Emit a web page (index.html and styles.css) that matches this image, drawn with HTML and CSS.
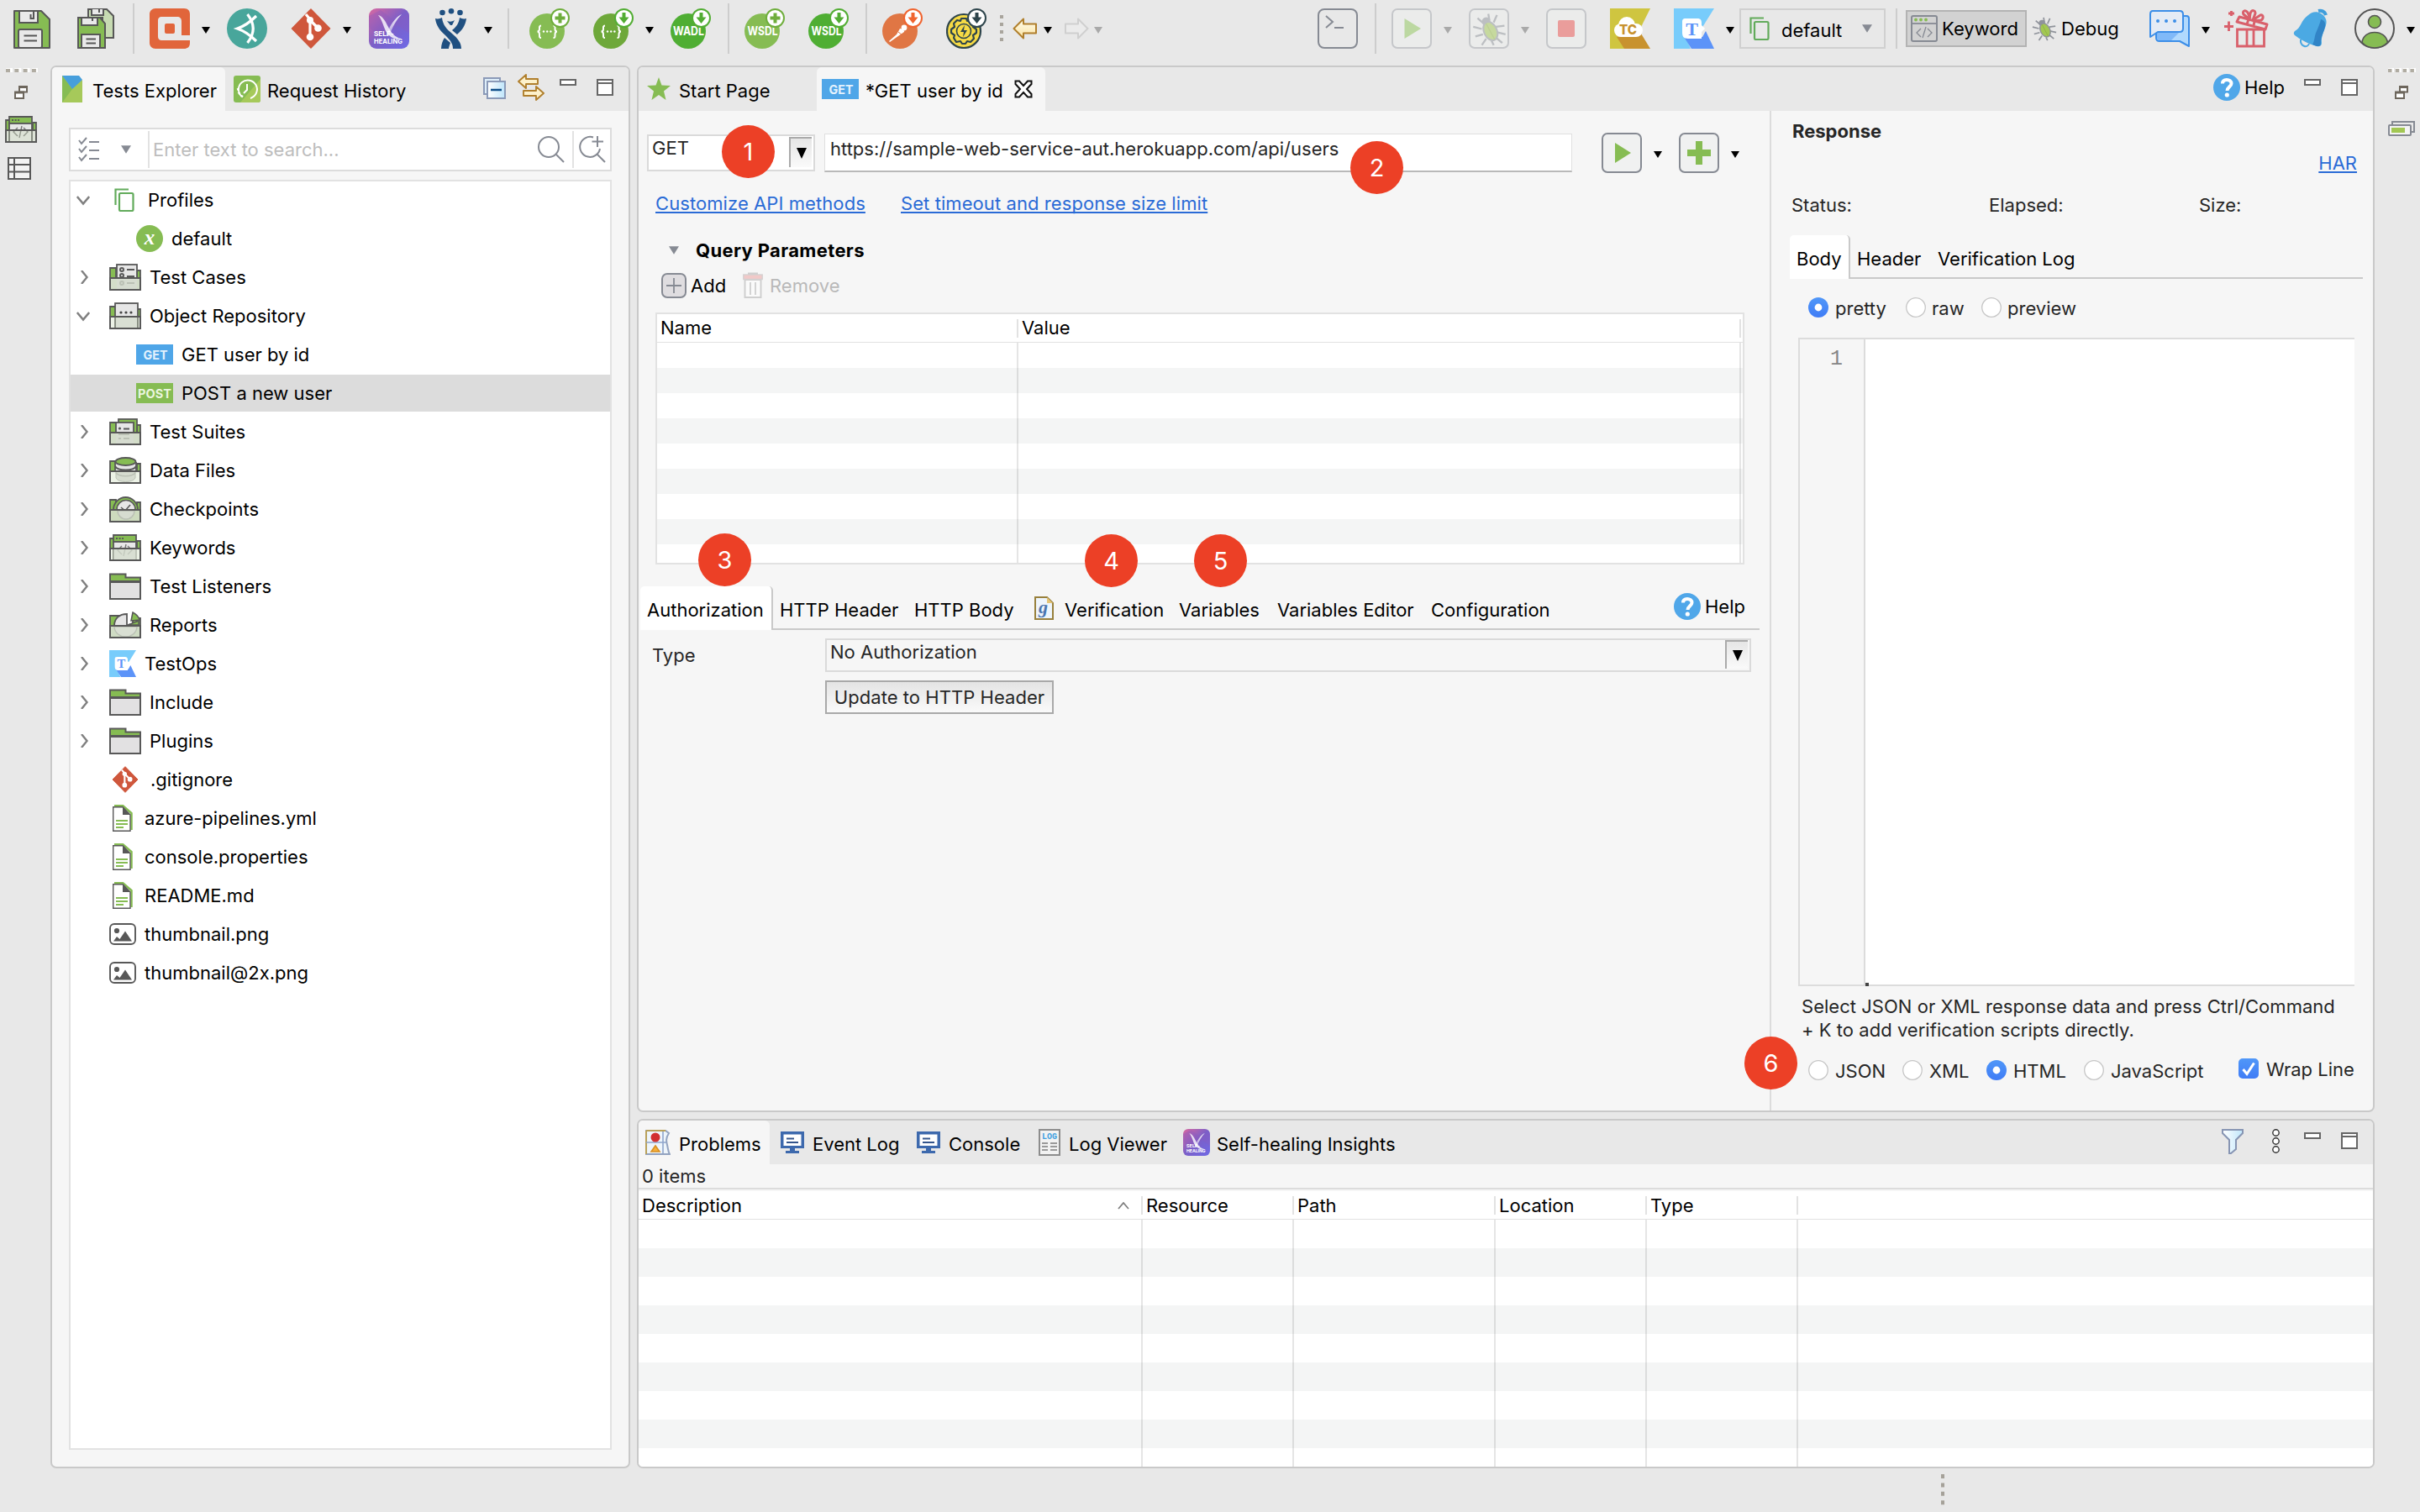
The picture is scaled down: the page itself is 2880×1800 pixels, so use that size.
FILE: index.html
```html
<!DOCTYPE html>
<html lang="en">
<head>
<meta charset="utf-8">
<title>Katalon Studio</title>
<link rel="stylesheet" href="styles.css">
</head>
<body>
<svg class="defs" width="0" height="0" aria-hidden="true">
  <defs>
    <linearGradient id="gHeal" x1="0" y1="0" x2="1" y2="1"><stop offset="0" stop-color="#d968a0"/><stop offset=".5" stop-color="#7b5fc8"/><stop offset="1" stop-color="#6e6ae6"/></linearGradient>
    <linearGradient id="gX" x1="0" y1="0" x2="0" y2="1"><stop offset="0" stop-color="#fff" stop-opacity=".95"/><stop offset="1" stop-color="#fff" stop-opacity=".35"/></linearGradient>
    <linearGradient id="gGold" x1="0" y1="0" x2="0" y2="1"><stop offset="0" stop-color="#fffdf0"/><stop offset="1" stop-color="#fbe3a0"/></linearGradient>
    <linearGradient id="gBlue" x1="0" y1="0" x2="1" y2="0"><stop offset="0" stop-color="#fff"/><stop offset="1" stop-color="#bfe6fb"/></linearGradient>
    <linearGradient id="gRadio" x1="0" y1="0" x2="0" y2="1"><stop offset="0" stop-color="#5097f8"/><stop offset="1" stop-color="#3f7cf6"/></linearGradient>
    <symbol id="down" viewBox="0 0 10 8"><path d="M0 0H10L5 8Z"/></symbol>
    <symbol id="copy" viewBox="0 0 24 28"><g fill="none" stroke="#62ab5b" stroke-width="2.2"><path d="M1.500 20V1.500H17"/><rect x="6" y="6" width="16.500" height="21" rx="1.500"/></g></symbol>
    <symbol id="bug" viewBox="0 0 32 32"><g fill="none" stroke="#8f939b" stroke-width="1.800"><path d="M12 12L5 6M9 16L1 14M10 21L3 23M13 25L9 31M16 8L15 2M20 10L23 3M22 14L30 13M23 19L31 21M22 24L28 29M18 27L20 31"/></g><circle cx="13" cy="9" r="4" fill="#8f939b"/><ellipse cx="17" cy="18" rx="6" ry="9" transform="rotate(-25 17 18)" fill="#a2c753" stroke="#8f939b" stroke-width="1.600"/><path d="M13 11L21 26" stroke="#8fb440" stroke-width="1"/></symbol>
    <symbol id="min" viewBox="0 0 20 32"><rect x="1" y="7" width="18" height="6" fill="#fff" stroke="#666" stroke-width="2"/></symbol>
    <symbol id="max" viewBox="0 0 20 32"><rect x="1" y="7" width="18" height="18" fill="#fff" stroke="#666" stroke-width="2"/><path d="M1 11H19" stroke="#666" stroke-width="2"/></symbol>
    <symbol id="help" viewBox="0 0 32 32"><circle cx="16" cy="16" r="16" fill="#50a7e9"/><path d="M11 11.500C11 8.500 13 7 16 7S21.500 8.700 21.500 11.500C21.500 15 16.500 15.500 16.500 20" fill="none" stroke="#fff" stroke-width="4"/><circle cx="16.300" cy="25" r="2.600" fill="#fff"/></symbol>
    <symbol id="restore" viewBox="0 0 16 16"><rect x="6" y="1.500" width="9" height="6" fill="#fff" stroke="#6d665c" stroke-width="2"/><path d="M5 1.500H16" stroke="#6d665c" stroke-width="3"/><rect x="1" y="8" width="10" height="7" fill="#fff" stroke="#6d665c" stroke-width="2"/><path d="M0 8H12" stroke="#6d665c" stroke-width="3"/></symbol>
    <symbol id="heal" viewBox="0 0 48 48"><rect width="48" height="48" rx="9" fill="url(#gHeal)"/><path d="M0 9L14 2L30 14L48 6V30L34 20L12 34L0 22Z" fill="#8a5cc0" opacity=".35"/><path d="M11 8C16 9 19 14 23 22C27 30 31 34 38 36C31 38 24 34 20 27C17 20 15 12 11 8Z" fill="#fff" opacity=".8"/><path d="M39 7C34 9 29 15 25 22L20 33H24C28 22 33 13 39 7Z" fill="url(#gX)"/><text x="6" y="33" font-size="8.200" font-weight="700" fill="#fff" font-family="Inter">SELF-</text><text x="6" y="41.500" font-size="8.200" font-weight="700" fill="#fff" font-family="Inter" textLength="34" lengthAdjust="spacingAndGlyphs">HEALING</text></symbol>
    <symbol id="git" viewBox="0 0 48 48"><path d="M24 1L46.500 24L24 47L1.500 24Z" fill="#cf573c" stroke="#cf573c" stroke-width="1.500" stroke-linejoin="round"/><g stroke="#fff" stroke-width="3.200" fill="none"><path d="M18 7L23 13V34M23 14L32 23"/></g><g fill="#fff"><circle cx="23" cy="14" r="4"/><circle cx="23" cy="34" r="4.300"/><circle cx="32.500" cy="23.500" r="4.300"/></g></symbol>
    <symbol id="testops" viewBox="0 0 48 48"><path d="M0 0H48L33 24L14 34L20 48H0Z" fill="#78ccfb"/><path d="M12 34H34L38 27L48 48H21Z" fill="#5c93f8"/><path d="M14 12H28C32 12 33 14 33 18V36H17C11 36 10 33 10 28V16C10 13 11 12 14 12Z" fill="#fff"/><path d="M33 20L37 24L33 28Z" fill="#fff"/><text x="21.500" y="32" font-size="22" font-weight="700" text-anchor="middle" fill="#5c93f8" font-family="Liberation Serif">T</text></symbol>
    <symbol id="folder" viewBox="0 0 38 32"><path d="M1 10V1.500H19.500V5.500H37V10Z" fill="#86bc53" stroke="#585858" stroke-width="2"/><rect x="1" y="11" width="36" height="20" fill="#e2e1e2" stroke="#585858" stroke-width="2"/></symbol>
    <symbol id="fback" viewBox="0 0 38 32"><path d="M1 17V5H8V17ZM33 17V8H37V17Z" fill="#86bc53" stroke="#585858" stroke-width="1.800"/></symbol>
    <symbol id="ffront" viewBox="0 0 38 32"><rect x="1" y="17" width="36" height="14" fill="#c9dab6" fill-opacity=".35" stroke="#585858" stroke-width="2"/></symbol>
    <symbol id="doc" viewBox="0 0 24 32"><path d="M2 1H12L22.500 10V30" fill="none" stroke="#86bc53" stroke-width="2.500"/><path d="M.7 2.700H12L21 12V31.300H.7Z" fill="#fff" stroke="#585858" stroke-width="1.400"/><path d="M12 2.500L21 12H12Z" fill="#585858"/><path d="M4 19H18M4 23H18M4 27H13" stroke="#86bc53" stroke-width="2"/></symbol>
    <symbol id="image" viewBox="0 0 32 26"><rect x="1" y="1" width="30" height="24" rx="5" fill="#fff" stroke="#585858" stroke-width="1.900"/><circle cx="9" cy="9" r="3.100" fill="#585858"/><path d="M5 21.500L9 16L12.500 19L19 9.500L27 21.500Z" fill="#585858"/></symbol>
    <symbol id="chr" viewBox="0 0 16 16"><path d="M6 0L12.500 8L6 16" fill="none" stroke="#808080" stroke-width="2.400"/></symbol>
    <symbol id="chd" viewBox="0 0 16 16"><path d="M.8 4L8 12.500L15.200 4" fill="none" stroke="#808080" stroke-width="2.600"/></symbol>
    <symbol id="get" viewBox="0 0 44 24"><rect width="44" height="24" fill="#4fa6e8"/><text x="23" y="17.500" font-size="15" font-weight="700" text-anchor="middle" fill="#e4f2fd" font-family="Inter" textLength="29" lengthAdjust="spacingAndGlyphs">GET</text></symbol>
    <symbol id="post" viewBox="0 0 44 24"><rect width="44" height="24" fill="#86bc53"/><text x="22" y="17.500" font-size="15" font-weight="700" text-anchor="middle" fill="#eaf5df" font-family="Inter" textLength="40" lengthAdjust="spacingAndGlyphs">POST</text></symbol>
    <symbol id="plusb" viewBox="0 0 48 48"><circle cx="36.500" cy="11.500" r="10.500" fill="#fff" stroke="currentColor" stroke-width="2"/><path d="M36.500 5.500V17.500M30.500 11.500H42.500" stroke="currentColor" stroke-width="4"/></symbol>
    <symbol id="downb" viewBox="0 0 48 48"><circle cx="36.500" cy="11.500" r="10.500" fill="#fff" stroke="currentColor" stroke-width="2"/><path d="M34.500 5H38.500V10.500H42.500L36.500 18L30.500 10.500H34.500Z" fill="currentColor"/></symbol>
    <symbol id="braces" viewBox="0 0 48 48"><g fill="none" stroke="#fff" stroke-width="2"><path d="M14 20.500C11.500 20.500 12 23 12 24.500S11.500 27.500 9.500 27.500C11.500 27.500 12 29 12 31S11.500 35 14 35M28.500 20.500C31 20.500 30.500 23 30.500 24.500S31 27.500 33 27.500C31 27.500 30.500 29 30.500 31S31 35 28.500 35"/></g><g fill="#fff"><circle cx="17" cy="27.500" r="1.200"/><circle cx="21.200" cy="27.500" r="1.200"/><circle cx="25.400" cy="27.500" r="1.200"/></g></symbol>
    <symbol id="monitor" viewBox="0 0 28 26"><path d="M0 0H28V20H0Z" fill="#3d69ad"/><path d="M3.500 3.500H24.500V17H3.500Z" fill="#fff"/><path d="M7 8.500H16M7 13H21" stroke="#34558c" stroke-width="2"/><path d="M11 20H17V23H22V26H6V23H11Z" fill="#3d69ad"/></symbol>
    <symbol id="radio" viewBox="0 0 24 24"><circle cx="12" cy="12" r="11.300" fill="#fff" stroke="#c6c6c6" stroke-width="1.300"/></symbol>
    <symbol id="radioOn" viewBox="0 0 24 24"><circle cx="12" cy="12" r="12" fill="url(#gRadio)"/><circle cx="12" cy="12" r="4.400" fill="#fff"/></symbol>
    <symbol id="code" viewBox="0 0 38 32"><path d="M5 9V1H32V9Z" fill="#86bc53" stroke="#585858" stroke-width="1.800"/><path d="M8 5H17" stroke="#585858" stroke-width="2" stroke-dasharray="2 1.600"/><rect x="5" y="9" width="27" height="22" fill="#e8e8e8" stroke="#585858" stroke-width="1.800"/><path d="M15 14L10 19L15 24M22 14L27 19L22 24M20 12L17 26" fill="none" stroke="#777" stroke-width="1.400"/></symbol>
  </defs>
</svg>

<header class="toolbar">
  <div class="tools tools-main">
    <svg class="i48" viewBox="0 0 48 48"><path d="M1 3H33L43 13V47H1Z" fill="#86bc53" stroke="#575757" stroke-width="2" stroke-linejoin="round"/><path d="M7 3H29V17H7Z" fill="#e9e9e9" stroke="#575757" stroke-width="2"/><path d="M20.500 7V12H24V3" fill="none" stroke="#575757" stroke-width="2"/><rect x="6" y="25" width="28" height="22" rx="2" fill="#e9e9e9" stroke="#575757" stroke-width="2"/><path d="M12.500 32.500H28M12.500 38.500H28" stroke="#575757" stroke-width="2"/></svg>
    <svg class="i48" viewBox="0 0 48 48"><path d="M13 1H35L43 9V35H30V11H13Z" fill="#c7dbb2" stroke="#575757" stroke-width="2"/><path d="M17 1V8H31V1M26 1V5" fill="#e9e9e9" stroke="#575757" stroke-width="2"/><path d="M1 11H27L33 18V47H1Z" fill="#86bc53" stroke="#575757" stroke-width="2"/><path d="M5 11H24V20H5ZM18 11V15" fill="#e9e9e9" stroke="#575757" stroke-width="2"/><rect x="5" y="31" width="22" height="16" fill="#e9e9e9" stroke="#575757" stroke-width="2"/><path d="M10.500 36.500H22M10.500 41.500H22" stroke="#575757" stroke-width="2"/></svg>
    <i class="sep tall"></i>
    <svg class="i48" viewBox="0 0 48 48"><path d="M7 0H41C46 0 48 3 48 7V32H38V15C38 12 36 10 33 10H15C11 10 10 12 10 15V33C10 37 12 38 15 38H48V41C48 46 45 48 41 48H7C3 48 0 45 0 41V7C0 3 3 0 7 0Z" fill="#e1653b"/><rect x="18" y="18" width="12" height="12" rx="2" fill="#e1653b"/></svg>
    <svg class="dn"><use href="#down"/></svg>
    <svg class="i48" viewBox="0 0 48 48"><circle cx="24" cy="24" r="24" fill="#48a69b"/><path d="M24.500 7Q38 24 24.500 41M35 9Q24 20 12.500 24Q24 28 35 39" fill="none" stroke="#fff" stroke-width="3.200"/></svg>
    <svg class="i48" viewBox="0 0 48 48"><use href="#git"/></svg>
    <svg class="dn"><use href="#down"/></svg>
    <svg class="i48"><use href="#heal"/></svg>
    <svg class="i48" viewBox="0 0 48 48"><g fill="#205081"><circle cx="8.500" cy="5" r="3.300"/><circle cx="19" cy="3.300" r="3.300"/><circle cx="29.500" cy="5" r="3.300"/><path d="M0 12C3 13 6 12 8 11C9 20 14 25 20 30C27 36 31 41 31 48H21C21 42 18 38 12 32C5 26 1 20 0 12ZM37 12C34 13 31 12 29 11C28 18 25 22 20 26L26 31C32 26 36 20 37 12ZM14 15C17 16 20 16 23 14L20 20H18ZM11 35L18 41C17 44 16 46 16 48H7C7 43 9 38 11 35Z"/></g></svg>
    <svg class="dn"><use href="#down"/></svg>
    <i class="sep"></i>
    <svg class="i48" viewBox="0 0 48 48" color="#6fae3c"><circle cx="21" cy="27" r="21" fill="#86bc53"/><use href="#braces"/><use href="#plusb"/></svg>
    <svg class="i48" viewBox="0 0 48 48" color="#52ad33"><circle cx="21" cy="27" r="21" fill="#6ea83a"/><use href="#braces"/><use href="#downb"/></svg>
    <svg class="dn"><use href="#down"/></svg>
    <svg class="i48" viewBox="0 0 48 48" color="#52ad33"><circle cx="21" cy="27" r="21" fill="#4fae33"/><text class="badge-text" x="21.500" y="32" textLength="37" lengthAdjust="spacingAndGlyphs">WADL</text><use href="#downb"/></svg>
    <i class="sep tall"></i>
    <svg class="i48" viewBox="0 0 48 48" color="#6fae3c"><circle cx="21" cy="27" r="21" fill="#86bc53"/><text class="badge-text" x="21.500" y="32" textLength="36" lengthAdjust="spacingAndGlyphs">WSDL</text><use href="#plusb"/></svg>
    <svg class="i48" viewBox="0 0 48 48" color="#52ad33"><circle cx="21" cy="27" r="21" fill="#4fae33"/><text class="badge-text" x="21.500" y="32" textLength="36" lengthAdjust="spacingAndGlyphs">WSDL</text><use href="#downb"/></svg>
    <i class="sep tall"></i>
    <svg class="i48" viewBox="0 0 48 48" color="#f0642f"><circle cx="21" cy="27" r="21" fill="#e07644"/><circle cx="26" cy="23" r="3.400" fill="#fff"/><path d="M21 24C24 24 27 27 26 28L9 40L8 39L17 31Z" fill="#fff"/><path d="M19 28L24 32" stroke="#e07644"/><use href="#downb"/></svg>
    <svg class="i48" viewBox="0 0 48 48" color="#2e454c"><circle cx="21" cy="27" r="20" fill="#f6da45" stroke="#2e454c" stroke-width="2.200"/><path d="M18 12H24L25 15L30 14L33 19L32 22L36 25V29L32 32L33 36L29 40L25 39L23 42H19L17 39L12 40L9 35L10 32L6 29V25L10 22L9 18L13 14L17 15Z" fill="none" stroke="#2e454c" stroke-width="2.200" stroke-linejoin="round"/><circle cx="21" cy="27" r="8.500" fill="none" stroke="#2e454c" stroke-width="1.600"/><path d="M22 20L17 28H21L20 34L25 26H21Z" fill="#2e454c"/><use href="#downb"/></svg>
    <svg width="4" height="34" viewBox="0 0 4 34"><path d="M2 1V34" stroke="#a9a59d" stroke-width="4" stroke-dasharray="4 5"/></svg>
    <svg width="30" height="26" viewBox="0 0 30 26"><path d="M1.500 13L13 1.500V7.500H28V18.500H13V24.500Z" fill="url(#gGold)" stroke="#b07f2c" stroke-width="2" stroke-linejoin="round"/></svg>
    <svg class="dn"><use href="#down"/></svg>
    <svg width="30" height="26" viewBox="0 0 30 26"><path d="M28.500 13L17 1.500V7.500H2V18.500H17V24.500Z" fill="#ebebeb" stroke="#cfcfcf" stroke-width="2" stroke-linejoin="round"/></svg>
    <svg class="dn off"><use href="#down"/></svg>
  </div>
  <div class="tools tools-side">
    <svg class="i48" viewBox="0 0 48 48"><rect x="1" y="1" width="46" height="46" rx="7" fill="none" stroke="#868a93" stroke-width="2"/><path d="M10 9L18 16L10 23M20 23H31" fill="none" stroke="#868a93" stroke-width="2"/></svg>
    <i class="sep tall"></i>
    <svg class="i48" viewBox="0 0 48 48"><rect x="1" y="1" width="46" height="46" rx="6" fill="#ebeceb" stroke="#c5c7ca" stroke-width="2"/><path d="M15.500 12L35 24L15.500 36Z" fill="#bcd8a1"/></svg>
    <svg class="dn off"><use href="#down"/></svg>
    <svg class="i48" viewBox="0 0 48 48"><rect x="1" y="1" width="46" height="46" rx="6" fill="#ebeceb" stroke="#c5c7ca" stroke-width="2"/><svg x="4" y="4" width="41" height="41" opacity=".5"><use href="#bug"/></svg></svg>
    <svg class="dn off"><use href="#down"/></svg>
    <svg class="i48" viewBox="0 0 48 48"><rect x="1" y="1" width="46" height="46" rx="6" fill="#ebeceb" stroke="#c5c7ca" stroke-width="2"/><rect x="14" y="14" width="20" height="20" rx="2" fill="#ea9d9b"/></svg>
    <svg class="i48" viewBox="0 0 48 48"><path d="M0 0H48L39 18L33 32H10L18 48H0Z" fill="#cfc540"/><path d="M8 34L37 30L48 48H17Z" fill="#c8922f"/><circle cx="20" cy="20" r="10" fill="#fff"/><rect x="5" y="18" width="34" height="16" rx="8" fill="#fff"/><text x="21.500" y="31" font-size="16" font-weight="800" text-anchor="middle" fill="#c8922f" font-family="Inter" textLength="21" lengthAdjust="spacingAndGlyphs">TC</text></svg>
    <svg class="i48"><use href="#testops"/></svg>
    <svg class="dn"><use href="#down"/></svg>
    <div class="profile-combo"><svg width="24" height="28"><use href="#copy"/></svg><span>default</span><svg class="dn big"><use href="#down"/></svg></div>
    <i class="sep"></i>
    <div class="perspective on"><svg width="32" height="32" viewBox="0 0 32 32"><rect x="1" y="1" width="30" height="30" rx="2" fill="none" stroke="#868a93" stroke-width="2"/><path d="M1 10H31" stroke="#868a93" stroke-width="1.800"/><circle cx="6" cy="5.500" r="1.900" fill="#86bc53"/><circle cx="12" cy="5.500" r="1.900" fill="#86bc53"/><circle cx="18" cy="5.500" r="1.900" fill="#86bc53"/><path d="M12 16L7 21L12 26M20 16L25 21L20 26M18 14L14 27" fill="none" stroke="#868a93" stroke-width="1.300"/></svg><span>Keyword</span></div>
    <div class="perspective"><svg width="30" height="30"><use href="#bug"/></svg><span>Debug</span></div>
    <svg class="i48" viewBox="0 0 48 48"><path d="M39 9H44C46 9 47 10 47 12V45L36 39H12C9 39 8 38 8 35V28" fill="#b1d9fd" stroke="#3c8ee8" stroke-width="2" stroke-linejoin="round"/><path d="M9 28H36L26 38H12C9 38 9 36 9 33Z" fill="#80b9f8"/><path d="M4 3H36C39 3 40 4 40 7V24C40 27 39 28 36 28H10L1 34V7C1 4 2 3 4 3Z" fill="#e4ebf5" stroke="#3c8ee8" stroke-width="2" stroke-linejoin="round"/><g fill="#3c8ee8"><circle cx="10" cy="15" r="2"/><circle cx="20" cy="15" r="2"/><circle cx="30" cy="15" r="2"/></g></svg>
    <svg class="dn"><use href="#down"/></svg>
    <svg width="54" height="48" viewBox="0 0 54 48"><g fill="none" stroke="#d9606b" stroke-width="3"><path d="M16.500 25H48.500V45H16.500ZM28 25V45M36 25V45M6.500 15.500V27M1 21.500H12M9.500 3V9M6 6H13" stroke-width="2.800"/><path d="M19 10L52 19L50 25L16 16ZM31 13L32 6C34 1 38 2 38 6L35 14L44 8C48 7 48 12 45 14L36 15M31 13L24 7C22 3 26 1 29 5L32 12M30 13L28 19M37 15L36 21" stroke-linejoin="round"/></g></svg>
    <svg width="42" height="48" viewBox="0 0 42 48"><path d="M30 3C34 2 38 4 39 8" fill="none" stroke="#3f9edc" stroke-width="4"/><path d="M9 37C8 45 17 48 19 42" fill="none" stroke="#4ba9e3" stroke-width="2"/><path d="M18 8C22 4 28 3 33 6C38 9 41 14 39 20C37 28 33 33 34 41C34 45 31 46 28 45C18 42 8 37 2 32C0 30 1 28 2 27C10 23 9 14 18 8Z" fill="#4ba9e3"/><path d="M33 13C37 14 39 17 38 22C36 29 33 34 33 41C33 45 31 45 28 45L23 43C26 38 25 33 28 27C30 22 32 18 33 13Z" fill="#3184c6"/></svg>
    <svg class="i48" viewBox="0 0 48 48"><circle cx="24" cy="24" r="23" fill="none" stroke="#555" stroke-width="2"/><circle cx="24" cy="16" r="7.500" fill="#86bc53" stroke="#555" stroke-width="1.600"/><path d="M9 40.500C10 33 16 28.500 24 28.500S38 33 39.500 40.500C35 45 30 47 24 47S13 45 9 40.500Z" fill="#86bc53" stroke="#555" stroke-width="1.600"/></svg>
    <svg class="dn"><use href="#down"/></svg>
  </div>
</header>

<main class="workbench">
  <aside class="dock">
    <svg width="38" height="6"><path d="M0 3.500H38" stroke="#fff" stroke-width="5" stroke-dasharray="8 2.300"/><path d="M0 4H38" stroke="#b0aca2" stroke-width="4" stroke-dasharray="5 5.300"/></svg>
    <svg class="d-restore" width="16" height="16"><use href="#restore"/></svg>
    <svg class="d-code" width="38" height="32"><use href="#fback"/><use href="#code"/><use href="#ffront"/></svg>
    <svg class="d-table" width="28" height="27" viewBox="0 0 28 27"><path d="M1 1H27V26H1ZM1 9H27M1 17.500H27M8 1V26" fill="#f3f3f3" stroke="#585858" stroke-width="2"/></svg>
  </aside>

  <section class="panel explorer">
    <div class="strip">
      <div class="tab active t-explorer"><svg width="24" height="32" viewBox="0 0 24 32"><path d="M0 0H19L24 6V32H0Z" fill="#a6c95a"/><path d="M0 0V32L12 16Z" fill="#86bc53"/><path d="M0 0H20L24 5L12 16Z" fill="#479fdc"/></svg><span>Tests Explorer</span></div>
      <div class="tab t-history"><svg width="32" height="32" viewBox="0 0 32 32"><rect width="32" height="32" rx="3" fill="#86bc53"/><path d="M8 32L32 4V29C32 31 31 32 29 32Z" fill="#a6c95a"/><path d="M10 25A11 11 0 1 1 20 27" fill="none" stroke="#fff" stroke-width="2"/><path d="M16 10V17L12 21" fill="none" stroke="#fff" stroke-width="2"/><path d="M5 15L6 20L9 24L13 26" stroke="#fff" stroke-width="2.500" stroke-dasharray="2.500 2.500" fill="none"/></svg><span>Request History</span></div>
      <div class="strip-tools">
        <svg width="27" height="32" viewBox="0 0 27 32"><rect x="1" y="5" width="19" height="19" fill="#dfeffa" stroke="#8b9ab8" stroke-width="2"/><rect x="5" y="9" width="21" height="20" fill="url(#gBlue)" stroke="#8b9ab8" stroke-width="2"/><path d="M9 19H22" stroke="#0f4f8a" stroke-width="2.400"/></svg>
        <svg class="m14" width="32" height="32" viewBox="0 0 32 32"><g fill="#fdf1cb" stroke="#b07f2c" stroke-width="1.900" stroke-linejoin="round"><path d="M1 9L10 1V6H24V12H10V17Z"/><path d="M31 23L22 15V20H7V26H22V31Z"/></g></svg>
        <svg class="m18" width="20" height="32"><use href="#min"/></svg>
        <svg class="m24" width="20" height="32"><use href="#max"/></svg>
      </div>
    </div>
    <div class="search">
      <div class="search-filter"><svg width="26" height="30" viewBox="0 0 26 30"><path d="M1 4L4 8L10 1M1 14L4 18L10 11M1 24L4 28L10 21M13 6H25M13 16H25M13 26H25" fill="none" stroke="#868a93" stroke-width="2"/></svg><svg class="dn big"><use href="#down"/></svg></div>
      <div class="search-text">Enter text to search...</div>
      <svg width="34" height="34" viewBox="0 0 34 34"><circle cx="14" cy="14" r="12" fill="none" stroke="#868a93" stroke-width="2"/><path d="M23 23L32 32" stroke="#868a93" stroke-width="2"/></svg>
      <div class="search-add"><svg width="34" height="34" viewBox="0 0 34 34"><path d="M18 2.500A12 12 0 1 0 26 16M23 23L32 32M23 1V14M16.500 7.500H30" fill="none" stroke="#868a93" stroke-width="2"/></svg></div>
    </div>
    <div class="tree">
      <div class="node"><svg class="ch"><use href="#chd"/></svg><svg class="n-copy" width="24" height="28"><use href="#copy"/></svg><span class="g17">Profiles</span></div>
      <div class="node child"><svg width="32" height="32" viewBox="0 0 32 32"><circle cx="16" cy="16" r="16" fill="#86bc53"/><text x="16" y="22.500" font-size="25" font-style="italic" font-weight="700" text-anchor="middle" fill="#fff" font-family="Liberation Serif">x</text></svg><span class="g10">default</span></div>
      <div class="node"><svg class="ch"><use href="#chr"/></svg><svg class="fi" viewBox="0 0 38 32"><use href="#fback"/><rect x="9" y="1" width="24" height="30" fill="#e6e6e6" stroke="#585858" stroke-width="1.800"/><circle cx="15" cy="7" r="2" fill="none" stroke="#585858" stroke-width="2"/><circle cx="15" cy="14" r="2" fill="none" stroke="#585858" stroke-width="2"/><path d="M21 7H30M21 15H30" stroke="#585858" stroke-width="2"/><path d="M1 17H37V31H1Z" fill="#d9dfd3"/><path d="M9 17H33V31H9Z" fill="#dddddd"/><circle cx="15" cy="23" r="2" fill="none" stroke="#b4b4b4" stroke-width="2"/><path d="M21 23H30" stroke="#b4b4b4" stroke-width="2"/><use href="#ffront"/></svg><span class="g10">Test Cases</span></div>
      <div class="node"><svg class="ch"><use href="#chd"/></svg><svg class="fi" viewBox="0 0 38 32"><use href="#fback"/><rect x="7" y="1" width="27" height="30" fill="#e6e6e6" stroke="#585858" stroke-width="1.800"/><circle cx="14" cy="12" r="1.600" fill="#444"/><circle cx="20" cy="12" r="1.600" fill="#444"/><circle cx="26" cy="12" r="1.600" fill="#444"/><path d="M8 17H33V31H8Z" fill="#e2e2e2"/><use href="#ffront"/></svg><span class="g10">Object Repository</span></div>
      <div class="node child"><svg width="44" height="24"><use href="#get"/></svg><span class="g10">GET user by id</span></div>
      <div class="node child selected"><svg width="44" height="24"><use href="#post"/></svg><span class="g10">POST a new user</span></div>
      <div class="node"><svg class="ch"><use href="#chr"/></svg><svg class="fi" viewBox="0 0 38 32"><use href="#fback"/><rect x="11" y="1" width="22" height="28" fill="#86bc53" stroke="#585858" stroke-width="1.800"/><rect x="8" y="5" width="21" height="26" fill="#e6e6e6" stroke="#585858" stroke-width="1.800"/><circle cx="12.500" cy="12" r="1.600" fill="#585858"/><path d="M17 12.500H24" stroke="#585858" stroke-width="2"/><path d="M1 17H37V31H1Z" fill="#d9dfd3"/><path d="M8 17H29V31H8Z" fill="#dddddd"/><path d="M11 24H14M17 24H24M11 19H24" stroke="#b4b4b4" stroke-width="2"/><use href="#ffront"/></svg><span class="g10">Test Suites</span></div>
      <div class="node"><svg class="ch"><use href="#chr"/></svg><svg class="fi" viewBox="0 0 38 32"><use href="#fback"/><path d="M7 6V17H32V6" fill="#e6e6e6" stroke="#585858" stroke-width="1.800"/><ellipse cx="19.500" cy="5.500" rx="12" ry="4.500" fill="#86bc53" stroke="#585858" stroke-width="1.800"/><path d="M7 11C10 17 29 17 32 11" fill="none" stroke="#585858" stroke-width="1.800"/><path d="M8 17H31V25C28 31 11 31 8 25Z" fill="#dedede" stroke="#b4b4b4"/><path d="M8 19C12 24 27 24 31 19" fill="none" stroke="#b4b4b4" stroke-width="1.500"/><use href="#ffront"/></svg><span class="g10">Data Files</span></div>
      <div class="node"><svg class="ch"><use href="#chr"/></svg><svg class="fi" viewBox="0 0 38 32"><use href="#fback"/><path d="M5 17A14.500 15 0 0 1 34 17Z" fill="#86bc53" stroke="#585858" stroke-width="1.800"/><circle cx="20" cy="16.500" r="11" fill="#e6e6e6" stroke="#585858" stroke-width="1.600"/><path d="M14 14L19 18L25 11" fill="none" stroke="#585858" stroke-width="1.600"/><path d="M1 17H37V31H1Z" fill="#cfdcc2"/><path d="M10 18A10 10 0 0 0 30 18Z" fill="#dedede" stroke="#b4b4b4" stroke-width="1.600"/><use href="#ffront"/></svg><span class="g10">Checkpoints</span></div>
      <div class="node"><svg class="ch"><use href="#chr"/></svg><svg class="fi" viewBox="0 0 38 32"><use href="#fback"/><use href="#code"/><path d="M5 17H33V31H5Z" fill="#e0e0e0" opacity=".7"/><use href="#ffront"/></svg><span class="g10">Keywords</span></div>
      <div class="node"><svg class="ch"><use href="#chr"/></svg><svg class="fi"><use href="#folder"/></svg><span class="g10">Test Listeners</span></div>
      <div class="node"><svg class="ch"><use href="#chr"/></svg><svg class="fi" viewBox="0 0 38 32"><path d="M1 17V5H14V17ZM28 17V8H37V17Z" fill="#86bc53" stroke="#585858" stroke-width="1.800"/><path d="M6 17C6 8 12 3 21 3V17Z" fill="#e6e6e6" stroke="#585858" stroke-width="1.800"/><path d="M26 11L28 1C32 3 35 6 36 10ZM22 16L35 11V16Z" fill="#86bc53" stroke="#585858" stroke-width="1.500"/><path d="M1 17H37V31H1Z" fill="#d3decb"/><path d="M6 18C7 34 32 34 33 18Z" fill="#e2e2e2" stroke="#b4b4b4" stroke-width="1.500"/><use href="#ffront"/></svg><span class="g10">Reports</span></div>
      <div class="node"><svg class="ch"><use href="#chr"/></svg><svg class="n-ops" width="32" height="32"><use href="#testops"/></svg><span class="g10">TestOps</span></div>
      <div class="node"><svg class="ch"><use href="#chr"/></svg><svg class="fi"><use href="#folder"/></svg><span class="g10">Include</span></div>
      <div class="node"><svg class="ch"><use href="#chr"/></svg><svg class="fi"><use href="#folder"/></svg><span class="g10">Plugins</span></div>
      <div class="node leaf"><svg class="n-git" width="32" height="32"><use href="#git"/></svg><span>.gitignore</span></div>
      <div class="node leaf"><svg class="n-doc" width="24" height="32"><use href="#doc"/></svg><span>azure-pipelines.yml</span></div>
      <div class="node leaf"><svg class="n-doc" width="24" height="32"><use href="#doc"/></svg><span>console.properties</span></div>
      <div class="node leaf"><svg class="n-doc" width="24" height="32"><use href="#doc"/></svg><span>README.md</span></div>
      <div class="node leaf"><svg class="n-img" width="32" height="26"><use href="#image"/></svg><span>thumbnail.png</span></div>
      <div class="node leaf"><svg class="n-img" width="32" height="26"><use href="#image"/></svg><span>thumbnail@2x.png</span></div>
    </div>
  </section>

  <div class="center">
    <section class="panel editor">
      <div class="strip">
        <div class="tab t-start"><svg width="28" height="28" viewBox="0 0 28 28"><path d="M14 0L17.500 9.500L28 10L20 16.500L22.500 27L14 21L5.500 27L8 16.500L0 10L10.500 9.500Z" fill="#86bc53"/></svg><span>Start Page</span></div>
        <div class="tab active t-get"><svg width="44" height="24"><use href="#get"/></svg><span>*GET user by id</span><svg class="close" width="22" height="22" viewBox="0 0 22 22"><path d="M1.500 1.500H6L11 7L16 1.500H20.500V5L15 11L20.500 17V20.500H16L11 15L6 20.500H1.500V17L7 11L1.500 5Z" fill="#fff" stroke="#111" stroke-width="2"/></svg></div>
        <div class="strip-tools"><div class="help"><svg width="32" height="32"><use href="#help"/></svg><span>Help</span></div><svg width="20" height="32"><use href="#min"/></svg><svg class="m24" width="20" height="32"><use href="#max"/></svg></div>
      </div>
      <div class="editor-body">
        <div class="request">
          <div class="request-line">
            <div class="combo method"><span>GET</span><i class="combo-btn"><svg width="12" height="13" viewBox="0 0 12 13"><path d="M0 0H12L6 13Z"/></svg></i></div>
            <div class="url">https://sample-web-service-aut.herokuapp.com/api/users</div>
            <svg class="i48" viewBox="0 0 48 48"><rect x="1" y="1" width="46" height="46" rx="6" fill="#f0f1f1" stroke="#868a93" stroke-width="2"/><path d="M16 12L35 24L16 36Z" fill="#86bc53"/></svg>
            <svg class="dn"><use href="#down"/></svg>
            <svg class="i48" viewBox="0 0 48 48"><rect x="1" y="1" width="46" height="46" rx="6" fill="#f0f1f1" stroke="#868a93" stroke-width="2"/><path d="M24 10V38M10 24H38" stroke="#86bc53" stroke-width="8"/></svg>
            <svg class="dn"><use href="#down"/></svg>
          </div>
          <div class="request-links"><a>Customize API methods</a><a>Set timeout and response size limit</a></div>
          <div class="section-head"><svg class="dn big"><use href="#down"/></svg><b>Query Parameters</b></div>
          <div class="param-tools">
            <svg width="30" height="30" viewBox="0 0 30 30"><rect x="1" y="1" width="28" height="28" rx="6" fill="#dfdde0" stroke="#868a93" stroke-width="2"/><path d="M15 6V24M6 15H24" stroke="#868a93" stroke-width="1.800"/></svg><span>Add</span>
            <svg width="24" height="32" viewBox="0 0 24 32"><path d="M2.500 9H21.500V30H2.500Z" fill="#fafafa" stroke="#cfcfcf" stroke-width="2"/><path d="M6 0.500H18V3H6Z" fill="#cfcfcf"/><rect x=".8" y="3" width="22.400" height="5.500" fill="#f1c9c8" stroke="#d4d0d0" stroke-width="1.400"/><path d="M9 12V27M15 12V27" stroke="#cfcfcf" stroke-width="1.800"/></svg><span class="disabled">Remove</span>
          </div>
          <div class="params">
            <div class="params-head"><span>Name</span><span>Value</span><span></span></div>
            <div class="params-rows"><i></i><i></i><i></i></div>
          </div>
          <div class="subtabs auth-tabs">
            <div class="subtab active">Authorization</div><div class="subtab">HTTP Header</div><div class="subtab">HTTP Body</div>
            <div class="subtab verif"><svg width="23" height="28" viewBox="0 0 23 28"><path d="M1 1H15L22 8V27H1Z" fill="#eef5fc" stroke="#98803c" stroke-width="2"/><path d="M15 1V8H22Z" fill="#e3c478"/><text x="10.500" y="20" font-size="22" font-style="italic" font-weight="700" text-anchor="middle" fill="#4a76b0" font-family="Liberation Serif">g</text></svg>Verification</div>
            <div class="subtab">Variables</div><div class="subtab">Variables Editor</div><div class="subtab">Configuration</div>
            <div class="help"><svg width="32" height="32"><use href="#help"/></svg><span>Help</span></div>
          </div>
          <div class="auth-form">
            <label>Type</label>
            <div class="combo auth-type"><span>No Authorization</span><i class="combo-btn"><svg width="12" height="13" viewBox="0 0 12 13"><path d="M0 0H12L6 13Z"/></svg></i></div>
            <button>Update to HTTP Header</button>
          </div>
        </div>
        <div class="response">
          <b>Response</b>
          <a class="har">HAR</a>
          <div class="stats"><span>Status:</span><span>Elapsed:</span><span>Size:</span></div>
          <div class="subtabs resp-tabs"><div class="subtab active">Body</div><div class="subtab">Header</div><div class="subtab">Verification Log</div></div>
          <div class="options view-options">
            <svg class="rd"><use href="#radioOn"/></svg><span>pretty</span><svg class="rd"><use href="#radio"/></svg><span>raw</span><svg class="rd"><use href="#radio"/></svg><span>preview</span>
          </div>
          <div class="code"><div class="gutter">1</div><div class="code-area"><i></i></div></div>
          <p>Select JSON or XML response data and press Ctrl/Command<br>+ K to add verification scripts directly.</p>
          <div class="options format-options">
            <svg class="rd"><use href="#radio"/></svg><span>JSON</span><svg class="rd"><use href="#radio"/></svg><span>XML</span><svg class="rd"><use href="#radioOn"/></svg><span>HTML</span><svg class="rd"><use href="#radio"/></svg><span>JavaScript</span>
            <svg class="rd cb" viewBox="0 0 24 24"><rect width="24" height="24" rx="5" fill="url(#gRadio)"/><path d="M5.500 13L10 18.500L18.500 5.500" fill="none" stroke="#fff" stroke-width="3"/></svg><span class="cb">Wrap Line</span>
          </div>
        </div>
      </div>
    </section>

    <section class="panel problems">
      <div class="strip">
        <div class="tab active t-problems"><svg width="30" height="30" viewBox="0 0 30 30"><path d="M1 1H24L28 4C24 10 25 14 26 18S27 26 29 29H1Z" fill="#eef5fb" stroke="#93a3c0" stroke-width="2"/><path d="M1 1H24M1 1V29" stroke="#b9a15a" stroke-width="2"/><path d="M1 15H25M21 2V28" stroke="#8fa5cc" stroke-width="1.600"/><circle cx="12" cy="9" r="5.500" fill="#d22f2f"/><path d="M12 19L17 26H7Z" fill="#f5b13d" stroke="#d98f20" stroke-width="1.600"/></svg><span>Problems</span></div>
        <div class="tab"><svg width="28" height="26"><use href="#monitor"/></svg><span>Event Log</span></div>
        <div class="tab"><svg width="28" height="26"><use href="#monitor"/></svg><span>Console</span></div>
        <div class="tab"><svg width="26" height="32" viewBox="0 0 26 32"><rect x="1" y="1" width="24" height="30" fill="#f2f2f2" stroke="#8c8c8c" stroke-width="2"/><text x="13" y="11.500" font-size="10" font-weight="700" text-anchor="middle" fill="#3fa0e0" font-family="Liberation Mono">LOG</text><path d="M4 17H11M4 21H11M4 25H11M14 17H22M14 21H22M14 25H22" stroke="#9a9a9a" stroke-width="2"/></svg><span>Log Viewer</span></div>
        <div class="tab"><svg width="32" height="32"><use href="#heal"/></svg><span>Self-healing Insights</span></div>
        <div class="strip-tools">
          <svg class="filter" width="26" height="30" viewBox="0 0 26 30"><path d="M1 1H25V5L17 13V24L11 29H9V13L1 5Z" fill="url(#gBlue)" stroke="#8795b3" stroke-width="2"/></svg>
          <svg class="kebab" width="9" height="30" viewBox="0 0 9 30"><g fill="#fff" stroke="#333" stroke-width="1.400"><circle cx="4.500" cy="4.500" r="3.700"/><circle cx="4.500" cy="14.500" r="3.700"/><circle cx="4.500" cy="24.500" r="3.700"/></g></svg>
          <svg class="m2" width="20" height="32"><use href="#min"/></svg><svg class="m24 m2" width="20" height="32"><use href="#max"/></svg>
        </div>
      </div>
      <div class="count">0 items</div>
      <div class="grid-head"><span class="sorted">Description<svg width="14" height="9" viewBox="0 0 14 9"><path d="M1 8L7 1L13 8" fill="none" stroke="#808080" stroke-width="1.800"/></svg></span><span>Resource</span><span>Path</span><span>Location</span><span>Type</span></div>
      <div class="grid-rows"><i></i><i></i><i></i><i></i><i></i></div>
    </section>
  </div>

  <aside class="dock dock-right">
    <svg width="33" height="6"><path d="M0 3.500H38" stroke="#fff" stroke-width="5" stroke-dasharray="7 1.800"/><path d="M0 4H38" stroke="#b0aca2" stroke-width="4" stroke-dasharray="4.500 4.300"/></svg>
    <svg class="d-restore" width="16" height="16"><use href="#restore"/></svg>
    <svg class="d-note" width="32" height="18" viewBox="0 0 32 18"><path d="M5 5V1H31V13H27" fill="none" stroke="#868a93" stroke-width="2"/><rect x="1" y="5" width="26" height="12" rx="1" fill="#f4f4f4" stroke="#868a93" stroke-width="2"/><path d="M4 8H20V14H4Z" fill="#a2c753"/></svg>
  </aside>
</main>

<footer class="status"><svg width="4" height="38"><path d="M2 0V38" stroke="#a5a199" stroke-width="4" stroke-dasharray="5 5.400"/></svg></footer>

<div class="callout c1">1</div>
<div class="callout c2">2</div>
<div class="callout c3">3</div>
<div class="callout c4">4</div>
<div class="callout c5">5</div>
<div class="callout c6">6</div>
</body>
</html>
```

FILE: styles.css
```css
* { box-sizing: border-box; }

body {
  margin: 0;
  width: 2880px;
  height: 1800px;
  overflow: hidden;
  position: relative;
  background: #e8e8e8;
  color: #000;
  font: 22px/24px Inter, "Liberation Sans", sans-serif;
  letter-spacing: 0;
}

svg { display: block; flex: none; }
span, b, label { white-space: nowrap; }
.defs { position: absolute; }
.i48 { width: 48px; height: 48px; }
.dn { width: 10px; height: 8px; margin-top: 4px; fill: #000; }
.dn.off { fill: #a9a9a9; }
.dn.big { width: 12px; height: 10px; fill: #868a93; }
.badge-text { font: 700 14px Inter; fill: #fff; text-anchor: middle; letter-spacing: 0; }

/* toolbar */
.toolbar { display: flex; height: 78px; }
.tools { display: grid; height: 68px; align-items: center; }
.tools-main {
  width: 1568px;
  padding-left: 16px;
  grid-template-columns: 76px 66px 20px 62px 30px 76px 62px 31px 79px 58px 28px 26px 76px 62px 30px 68px 20px 76px 68px 20px 76px 64px 15px 37px 24px 36px 10px;
}
.tools-side {
  grid-template-columns: 68px 20px 62px 30px 62px 30px 76px 76px 62px 16px 186px 12px 150px 140px 62px 26px 83px 73px 62px 10px;
}
.sep { width: 2px; height: 48px; background: #cdcdcd; }
.sep.tall { height: 60px; }
.profile-combo {
  display: flex;
  align-items: center;
  width: 174px;
  height: 48px;
  padding: 0 14px 0 10px;
  border: 2px solid #d0d0d0;
}
.profile-combo span { margin: 4px auto 0 14px; }
.profile-combo .dn { margin-top: 0; }
.perspective { display: flex; align-items: center; width: 144px; height: 44px; gap: 5px; }
.perspective.on { padding-left: 4px; border: 2px solid #b3b3b3; background: #d2d2d2; }

/* workbench */
.workbench { display: grid; grid-template-columns: 60px 690px 8px 2068px 54px; height: 1670px; }
.workbench > .explorer { grid-column: 2; }
.workbench > .center { grid-column: 4; }
.dock { padding: 2px 0 0 7px; }
.d-restore { margin: 16px 0 0 10px; }
.d-code { margin: 20px 0 0 -1px; }
.d-table { margin: 17px 0 0 2px; }
.dock-right { padding-left: 16px; }
.dock-right .d-restore { margin-left: 8px; }
.d-note { margin-top: 26px; }
.center { display: flex; flex-direction: column; gap: 8px; }
.panel {
  display: flex;
  flex-direction: column;
  border: 2px solid #c9c9c9;
  border-radius: 7px;
  background: #f6f6f6;
  overflow: hidden;
}
.strip { display: flex; flex: none; height: 52px; background: #e8e8e8; }
.tab { display: flex; align-items: center; }
.tab.active { background: #f6f6f6; border-top-right-radius: 6px; }
.tab span { padding-top: 4px; }
.strip-tools { display: flex; margin-left: auto; padding: 8px 18px 0 0; }
.m14 { margin-left: 14px; }
.m18 { margin-left: 18px; }
.m24 { margin-left: 24px; }
.m2 { margin-top: 2px; }
.help { display: flex; align-items: center; gap: 5px; height: 32px; }

/* explorer */
.t-explorer { width: 206px; padding-left: 12px; gap: 12px; }
.t-history { padding-left: 10px; gap: 8px; }
.search {
  display: flex;
  align-items: center;
  height: 52px;
  margin: 20px 20px 10px 20px;
  border: 2px solid #dcdcdc;
  background: #fff;
}
.search-filter {
  display: flex;
  align-items: center;
  width: 94px;
  height: 44px;
  padding-left: 9px;
  gap: 25px;
  border-right: 2px solid #e2e2e2;
}
.search-filter .dn { margin: 0; }
.search-text { flex: 1; padding-left: 4px; color: #bdbdbd; }
.search-add { height: 44px; margin-left: 8px; padding: 5px 4px 0 5px; border-left: 2px solid #e2e2e2; }
.tree {
  flex: 1;
  display: flex;
  flex-direction: column;
  gap: 2px;
  margin: 0 20px 20px 20px;
  border: 2px solid #e2e2e2;
  background: #fff;
}
.node { display: flex; align-items: center; height: 44px; padding-left: 7px; flex: none; }
.node.child { padding-left: 78px; }
.node.leaf { padding-left: 46px; }
.node.selected { background: #dcdcdc; }
.ch { width: 16px; height: 16px; margin-right: 23px; }
.fi { width: 38px; height: 32px; }
.n-copy { margin-left: 6px; }
.n-git { margin: 0 14px 0 3px; }
.n-doc { margin: 0 15px 0 4px; }
.n-img { margin-right: 11px; }
.leaf .n-doc + span, .leaf .n-img + span { margin-left: -1px; }
.g10 { margin-left: 10px; }
.g17 { margin-left: 16px; }

/* request editor */
.editor { height: 1246px; }
.t-start { width: 212px; padding-left: 10px; gap: 10px; }
.t-get { width: 272px; padding-left: 6px; border-radius: 6px 6px 0 0; }
.t-get span { width: 177px; margin-left: 8px; letter-spacing: .05px; }
.editor .strip .help { width: 108px; }
.editor-body { flex: 1; display: grid; grid-template-columns: 1346px 1fr; color: #262626; }
.request { padding: 26px 0 0 10px; }
.request-line {
  display: grid;
  grid-template-columns: 211px 925px 62px 30px 62px 10px;
  align-items: center;
  height: 48px;
}
.combo { display: flex; border: 2px solid #dadada; background: #fff; }
.combo span { flex: 1; padding: 2px 0 0 4px; }
.combo-btn {
  display: grid;
  place-items: center;
  width: 27px;
  margin: 1px 1px 3px 0;
  border: solid #aaa;
  border-width: 2px 0 0 2px;
  background: linear-gradient(#e6e6e6, #fafafa);
}
.method { width: 200px; height: 44px; }
.method .combo-btn { margin-right: 2px; }
.url {
  width: 890px;
  height: 46px;
  padding: 5px 6px 0;
  border: 1px solid #e0e0e0;
  border-bottom: 2px solid #b9b9b9;
  background: #fff;
}
a { color: #2a6bd6; text-decoration: underline 2px; text-underline-offset: 2px; text-decoration-skip-ink: none; }
.request-links { display: grid; grid-template-columns: 292px auto; margin: 24px 0 0 10px; letter-spacing: .08px; }
.section-head { display: flex; align-items: center; gap: 20px; height: 24px; margin: 32px 0 0 26px; color: #000; }
.section-head .dn { margin: 0; }
.section-head b { letter-spacing: .35px; }
.param-tools {
  display: grid;
  grid-template-columns: 35px 62px 32px auto;
  align-items: center;
  height: 32px;
  margin: 14px 0 0 17px;
  color: #000;
}
.disabled { color: #b9b9b9; }
.params { width: 1296px; height: 300px; margin: 16px 0 0 10px; border: 2px solid #e2e2e2; background: #fff; color: #000; }
.params-head { height: 34px; padding: 6px 0; border-bottom: 1px solid #e2e2e2; }
.params-head, .params-rows { display: grid; grid-template-columns: 430px 860px auto; }
.params-head span { height: 22px; line-height: 21px; padding-left: 4px; border-right: 2px solid #e2e2e2; }
.params-head span:last-child { border: 0; }
.params-rows { height: 262px; background: repeating-linear-gradient(#fff 0 30px, #f4f5f5 30px 60px); }
.params-rows i, .grid-rows i { border-right: 2px solid rgba(0, 0, 0, .1); }
.params-rows i:last-child { border: 0; }
.subtabs { display: grid; height: 52px; color: #000; }
.subtab { height: 52px; padding-top: 6px; line-height: 44px; border-bottom: 2px solid #c9c9c9; white-space: nowrap; }
.subtab.active { border: solid #c9c9c9; border-width: 0 2px 0 0; border-radius: 5px 5px 0 0; background: #fff; }
.auth-tabs {
  width: 1332px;
  margin: 26px 0 0 -8px;
  grid-template-columns: 158px 160px 142px 173px 117px 183px 297px auto;
}
.auth-tabs .subtab { padding-left: 8px; }
.subtab.verif { display: flex; gap: 13px; }
.subtab.verif svg { margin: 6px 0 0 1px; }
.auth-tabs .help { height: 52px; border-bottom: 2px solid #c9c9c9; align-items: flex-start; padding-top: 8px; }
.auth-tabs .help span { padding-top: 4px; }
.auth-form { display: grid; grid-template-columns: 206px 1102px; gap: 10px 0; margin: 10px 0 0 6px; }
.auth-form label { padding-top: 8px; }
.auth-type { height: 40px; background: #f6f6f6; }
.auth-type .combo-btn { margin: 0 2px 2px 0; }
button {
  grid-column: 2;
  justify-self: start;
  width: 272px;
  height: 40px;
  padding: 0;
  border: 2px solid #a9a9a9;
  background: linear-gradient(#e4e4e4, #fafafa);
  color: #262626;
  font: inherit;
  letter-spacing: .05px;
  white-space: nowrap;
}

/* response */
.response { display: flex; flex-direction: column; padding: 12px 12px 0 22px; border-left: 2px solid #dcdcdc; }
.response b { padding-left: 3px; }
.har { align-self: flex-end; margin: 14px 7px 0 0; }
.stats { display: grid; grid-template-columns: 235px 250px auto; margin-top: 26px; padding-left: 2px; }
.resp-tabs { margin-top: 24px; grid-template-columns: 72px 96px auto; }
.resp-tabs .subtab { padding-left: 8px; }
.options { display: grid; height: 24px; }
.options span { padding-top: 1px; }
.rd { width: 24px; height: 24px; }
.view-options { margin: 22px 0 0 22px; grid-template-columns: 32px 84px 31px 59px 31px auto; }
.code { display: flex; height: 772px; margin: 24px 10px 0 10px; border: solid #dcdcdc; border-width: 2px 0 2px 2px; }
.gutter {
  width: 78px;
  padding: 12px 25px 0 0;
  border-right: 2px solid #dcdcdc;
  color: #858585;
  font-family: "Liberation Mono", monospace;
  font-size: 25px;
  text-align: right;
}
.code-area { flex: 1; display: flex; align-items: flex-end; background: #fff; }
.code-area i { width: 4px; height: 4px; margin-bottom: -2px; background: #444; }
.response p { margin: 10px 0 22px 14px; line-height: 28px; white-space: nowrap; letter-spacing: .03px; }
.format-options { margin-left: 22px; grid-template-columns: 32px 80px 32px 68px 32px 84px 32px 152px 33px auto; }
.options .cb { margin-top: -2px; }

/* problems */
.problems { height: 416px; }
.t-problems { padding-left: 8px; width: 156px; }
.problems .strip { display: grid; grid-template-columns: 156px 162px 158px 172px 250px 1fr; }
.problems .tab { gap: 10px; }
.problems .tab:not(.active) { padding-left: 13px; }
.problems .tab:nth-child(4) { padding-left: 0; }
.problems .tab:nth-child(5) { padding-left: 0; gap: 8px; }
.problems .tab span { padding-top: 4px; }
.problems .strip-tools { padding-top: 6px; }
.filter { margin: 4px 34px 0 0; }
.kebab { margin: 4px 29px 0 0; }
.count { height: 30px; padding: 2px 0 0 4px; border-bottom: 2px solid #dcdcdc; color: #262626; }
.grid-head, .grid-rows { display: grid; grid-template-columns: 600px 180px 240px 180px 180px; background-color: #fff; color: #000; }
.grid-head { flex: none; height: 34px; margin-top: 2px; padding: 6px 0 5px; border-bottom: 1px solid #e2e2e2; }
.grid-head span { padding-left: 4px; border-right: 2px solid #e2e2e2; line-height: 22px; height: 22px; }
.grid-head .sorted { display: flex; justify-content: space-between; align-items: center; padding: 0 14px 0 4px; }
.grid-rows { flex: 1; background: repeating-linear-gradient(#fff 0 34px, #f4f5f5 34px 68px); }

.status { height: 52px; padding: 7px 0 0 2310px; }

/* numbered callouts */
.callout {
  position: absolute;
  width: 63px;
  height: 63px;
  border-radius: 50%;
  background: #ec4026;
  color: #fff;
  font-size: 29px;
  line-height: 63px;
  text-align: center;
  letter-spacing: 0;
}
.c1 { left: 859px; top: 149px; }
.c2 { left: 1607px; top: 168px; }
.c3 { left: 831px; top: 635px; }
.c4 { left: 1291px; top: 636px; }
.c5 { left: 1421px; top: 636px; }
.c6 { left: 2076px; top: 1234px; }
```
